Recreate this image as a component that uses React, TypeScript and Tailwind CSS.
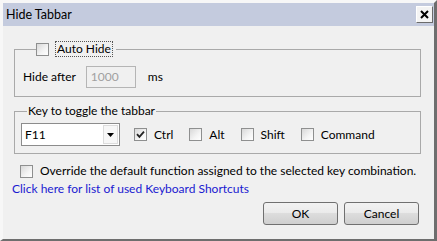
import React from 'react';

function CheckBox({ checked = false }: { checked?: boolean }) {
  return (
    <span className="w-[13px] h-[13px] shrink-0 border border-[#8e8f8f] bg-[linear-gradient(135deg,#d8d8d8,#f4f4f4_60%,#ffffff)] flex items-center justify-center">
      {checked && (
        <svg width="9" height="9" viewBox="0 0 9 9">
          <path d="M1 4.2 L3.4 6.8 L8 1.6" fill="none" stroke="#222" strokeWidth="1.8" />
        </svg>
      )}
    </span>
  );
}

function Option({ label, checked = false }: { label: string; checked?: boolean }) {
  return (
    <label className="flex items-center gap-[7px]">
      <CheckBox checked={checked} />
      <span>{label}</span>
    </label>
  );
}

export default function App() {
  return (
    <div className="w-[437px] h-[241px] flex flex-col bg-[#f0f0f0] border-t-[3px] border-l-[3px] border-r-[3px] border-b-[2px] border-t-[#f7f7f7] border-l-[#f7f7f7] border-r-[#6e6e6e] border-b-[#6e6e6e] font-['Lato',sans-serif] text-[12px] leading-[16px] text-black">
      {/* Title bar */}
      <div className="h-[23px] shrink-0 bg-[#c4cbde] flex items-center justify-between pl-[3px] pr-[1px]">
        <span className="text-[12.5px]">Hide Tabbar</span>
        <div className="w-[17px] h-[17px] border border-t-white border-l-white border-r-[#6b6b6b] border-b-[#6b6b6b] bg-[#f4f4f4] flex items-center justify-center">
          <svg width="9" height="9" viewBox="0 0 9 9">
            <path d="M1 1 L8 8 M8 1 L1 8" stroke="#000" strokeWidth="2" />
          </svg>
        </div>
      </div>

      {/* Body */}
      <div className="flex-1 flex flex-col pl-[11px] pr-[13px]">
        {/* Auto hide group */}
        <fieldset className="mt-[15px] border border-[#a9a9a9] pb-[8px] pl-[8px]">
          <legend className="ml-[13px] pr-[3px] flex items-center gap-[6px]">
            <CheckBox />
            <span className="border border-dotted border-[#555] px-[1px] h-[16px] flex items-center">Auto Hide</span>
          </legend>
          <div className="mt-[9px] flex items-center">
            <span>Hide after</span>
            <div className="ml-[10px] w-[50px] h-[22px] border border-[#b5b5b5] bg-[#f0f0f0] text-[#a0a0a0] flex items-center pl-[4px]">1000</div>
            <span className="ml-[12px]">ms</span>
          </div>
        </fieldset>

        {/* Key group */}
        <fieldset className="mt-[6px] border border-[#a9a9a9] pb-[7px] pl-[6px]">
          <legend className="ml-[6px] px-[1px]">Key to toggle the tabbar</legend>
          <div className="mt-[4px] flex items-center">
            <div className="w-[99px] h-[23px] border border-[#8c8c8c] bg-white flex items-center justify-between">
              <span className="pl-[3px]">F11</span>
              <span className="w-[15px] h-[19px] mr-[1px] border border-[#dcdcdc] bg-[#f7f7f7] flex items-center justify-center">
                <svg width="7" height="4" viewBox="0 0 7 4">
                  <path d="M0 0 H7 L3.5 4 Z" fill="#000" />
                </svg>
              </span>
            </div>
            <div className="ml-[14px] flex items-center gap-[16px]">
              <Option label="Ctrl" checked />
              <Option label="Alt" />
              <Option label="Shift" />
              <Option label="Command" />
            </div>
          </div>
        </fieldset>

        {/* Override */}
        <label className="mt-[9px] ml-[6px] flex items-center gap-[7px]">
          <CheckBox />
          <span>Override the default function assigned to the selected key combination.</span>
        </label>

        <a className="mt-[2px] -ml-[2px] text-[#1a1ad0] cursor-pointer">Click here for list of used Keyboard Shortcuts</a>

        {/* Buttons */}
        <div className="mt-[5px] flex justify-end gap-[6px] pr-[2px]">
          <button className="w-[75px] h-[23px] border border-[#707070] rounded-[3px] bg-[linear-gradient(#f2f2f2,#ebebeb_45%,#dddddd_50%,#cfcfcf)]">OK</button>
          <button className="w-[75px] h-[23px] border border-[#707070] rounded-[3px] bg-[linear-gradient(#f2f2f2,#ebebeb_45%,#dddddd_50%,#cfcfcf)]">Cancel</button>
        </div>
      </div>
    </div>
  );
}
